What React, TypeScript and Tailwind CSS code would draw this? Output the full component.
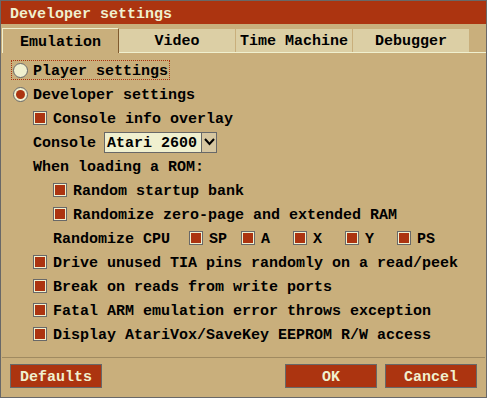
import React from "react";

const font = { fontFamily: '"Liberation Mono", "DejaVu Sans Mono", monospace' };

function Check({ label, className = "" }: { label: string; className?: string }) {
  return (
    <div className={`flex items-center h-[24px] ${className}`}>
      <span className="w-[14px] h-[14px] border border-[#686868] bg-[#f0f0cf] p-px flex">
        <span className="flex-1 bg-[#ac3410]" />
      </span>
      <span className="ml-[6px] pt-[2px]">{label}</span>
    </div>
  );
}

function Radio({ label, checked }: { label: string; checked?: boolean }) {
  return (
    <div className="flex items-center">
      <span className="w-[15px] h-[15px] rounded-full border border-[#686868] bg-[#f0f0cf] flex p-[2px]">
        {checked && <span className="flex-1 rounded-full bg-[#ac3410]" />}
      </span>
      <span className="ml-[5px] pt-[2px]">{label}</span>
    </div>
  );
}

export default function App() {
  const cpu = ["SP", "A", "X", "Y", "PS"];
  return (
    <div
      className="w-[487px] h-[398px] bg-[#c9af7c] border border-[#686868] flex flex-col text-[15px] font-bold leading-none text-black"
      style={font}
    >
      <div className="h-[23px] bg-[#ac3410] text-[#f0f0cf] flex items-center pl-[9px] pt-[4px]">
        Developer settings
      </div>

      {/* tabs */}
      <div className="flex mt-[4px] pl-[1px] h-[25px]">
        <div className="w-[117px] border-t border-l border-[#f0f0cf] border-r-[#805a2e] border-r flex items-center justify-center pt-[2px]">
          Emulation
        </div>
        <div className="flex flex-1 items-end border-b border-[#f0f0cf]">
          <div className="w-[116px] h-[23px] bg-[#dccfa5] flex items-center justify-center pt-[2px]">Video</div>
          <div className="w-px h-[23px]" />
          <div className="w-[116px] h-[23px] bg-[#dccfa5] flex items-center justify-center pt-[2px]">Time Machine</div>
          <div className="w-px h-[23px]" />
          <div className="w-[116px] h-[23px] bg-[#dccfa5] flex items-center justify-center pt-[2px]">Debugger</div>
        </div>
      </div>

      <div className="flex flex-col mt-[5px]">
        <div className="h-[24px] flex items-center pl-[10px]">
          <div className="border border-dotted border-[#ac3410] h-[20px] pl-px pr-[1px] flex items-center">
            <Radio label="Player settings" />
          </div>
        </div>
        <div className="h-[24px] flex items-center pl-[12px]">
          <Radio label="Developer settings" checked />
        </div>
        <Check label="Console info overlay" className="pl-[32px]" />
        <div className="h-[24px] flex items-center pl-[32px]">
          <span className="pt-[2px]">Console</span>
          <div className="ml-[8px] w-[113px] h-[21px] border border-[#686868] bg-[#f0f0cf] flex items-center">
            <span className="flex-1 pl-[2px] pt-[2px]">Atari 2600</span>
            <span className="w-[15px] h-full bg-[#d6c6a0] border-l border-[#686868] flex items-center justify-center">
              <svg width="11" height="8" viewBox="0 0 11 8">
                <path d="M1 1 L5.5 6 L10 1" stroke="#000" strokeWidth="2" fill="none" />
              </svg>
            </span>
          </div>
        </div>
        <div className="h-[24px] flex items-center pl-[32px] pt-[2px]">When loading a ROM:</div>
        <Check label="Random startup bank" className="pl-[52px]" />
        <Check label="Randomize zero-page and extended RAM" className="pl-[52px]" />
        <div className="h-[24px] flex items-center pl-[52px]">
          <span className="w-[136px] pt-[2px]">Randomize CPU</span>
          <div className="flex">
            {cpu.map((c) => (
              <Check key={c} label={c} className="w-[52px]" />
            ))}
          </div>
        </div>
        <Check label="Drive unused TIA pins randomly on a read/peek" className="pl-[32px]" />
        <Check label="Break on reads from write ports" className="pl-[32px]" />
        <Check label="Fatal ARM emulation error throws exception" className="pl-[32px]" />
        <Check label="Display AtariVox/SaveKey EEPROM R/W access" className="pl-[32px]" />
      </div>

      <div className="mt-[11px] h-px bg-[#a08a60] mx-px" />

      <div className="flex mt-[6px] px-[9px]">
        <button className="w-[92px] h-[24px] bg-[#ac3410] border border-[#686868] text-[#f0f0cf] font-bold pt-[2px]">
          Defaults
        </button>
        <div className="flex-1" />
        <button className="w-[92px] h-[24px] bg-[#ac3410] border border-[#686868] text-[#f0f0cf] font-bold pt-[2px]">
          OK
        </button>
        <button className="ml-[8px] w-[92px] h-[24px] bg-[#ac3410] border border-[#686868] text-[#f0f0cf] font-bold pt-[2px]">
          Cancel
        </button>
      </div>
    </div>
  );
}
